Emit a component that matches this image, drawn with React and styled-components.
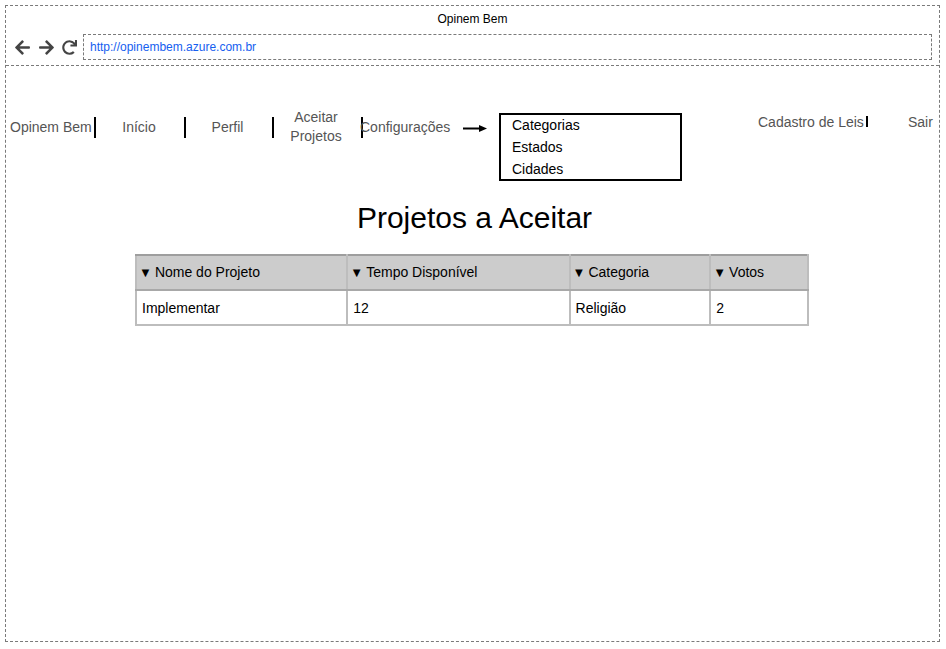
import React from "react";
import styled, { createGlobalStyle } from "styled-components";
import { FaArrowLeft, FaArrowRight, FaRedo } from "react-icons/fa";

const Global = createGlobalStyle`
  html, body { margin: 0; padding: 0; background: #fff; }
  body { font-family: "Liberation Sans", Arial, sans-serif; }
  * { box-sizing: border-box; }
`;

const Frame = styled.div`
  margin: 5px 0 0 5px;
  width: 935px;
  height: 637px;
  border: 1px dashed #7a7a7a;
  display: flex;
  flex-direction: column;
`;

const TitleBar = styled.div`
  height: 25px;
  display: flex;
  align-items: center;
  justify-content: center;
  font-size: 12px;
  color: #000;
  padding-top: 1px;
`;

const AddressRow = styled.div`
  height: 35px;
  display: flex;
  align-items: flex-start;
  padding: 3px 7px 0 8px;
  border-bottom: 1px dashed #7a7a7a;
`;

const NavIcons = styled.div`
  display: flex;
  align-items: center;
  height: 26px;
  gap: 7px;
  color: #444;
  margin-right: 6px;
`;

const AddressBox = styled.div`
  flex: 1;
  height: 26px;
  border: 1px dashed #7a7a7a;
  display: flex;
  align-items: center;
  padding-left: 6px;
  font-size: 12px;
  color: #1560f0;
`;

const Nav = styled.div`
  display: flex;
  align-items: flex-start;
  margin-top: 42px;
  padding-left: 4px;
  height: 73px;
`;

const NavLink = styled.div`
  width: ${(p) => p.$w}px;
  margin-top: ${(p) => (p.$top ?? 10)}px;
  margin-left: ${(p) => p.$ml || 0}px;
  padding-right: ${(p) => p.$pr || 0}px;
  font-size: 14px;
  line-height: 19px;
  color: #555;
  text-align: ${(p) => p.$align || "center"};
  white-space: nowrap;
  flex: none;
`;

const Sep = styled.div`
  width: 2px;
  height: ${(p) => p.$h || 21}px;
  margin-top: ${(p) => p.$top ?? 9}px;
  margin-left: ${(p) => p.$ml || 0}px;
  background: #000;
  flex: none;
`;

const LongArrow = styled.svg`
  margin: 16px 0 0 13px;
  flex: none;
`;

const Dropdown = styled.div`
  width: 183px;
  height: 68px;
  margin: 5px 0 0 12px;
  border: 2px solid #000;
  display: flex;
  flex-direction: column;
  padding: 0 0 0 11px;
  flex: none;
`;

const DropList = styled.div`
  margin-top: -1px;
`;

const DropItem = styled.div`
  font-size: 14px;
  line-height: 22px;
  color: #000;
`;

const Heading = styled.h1`
  margin: 19px 0 0 0;
  font-weight: normal;
  font-size: 30px;
  line-height: 36px;
  text-align: center;
  color: #000;
  padding-left: 4px;
`;

const Table = styled.table`
  margin: 18px 0 0 129px;
  border-collapse: collapse;
  width: 674px;
  font-size: 14px;
  color: #000;
`;

const Th = styled.th`
  width: ${(p) => p.$w}px;
  height: 35px;
  background: #cccccc;
  font-weight: normal;
  text-align: left;
  padding: 0 0 1px 2px;
  border: 2px solid #bdbdbd;
  border-top-color: #9e9e9e;
  border-bottom-color: #a8a8a8;
`;

const Td = styled.td`
  height: 35px;
  padding: 0 0 0 5px;
  border: 2px solid #bdbdbd;
`;

const Caret = styled.span`
  font-size: 13px;
  margin-right: 3px;
`;

const cols = [
  ["Nome do Projeto", 212],
  ["Tempo Disponível", 223],
  ["Categoria", 141],
  ["Votos", 98],
];
const row = ["Implementar", "12", "Religião", "2"];

export default function App() {
  return (
    <>
      <Global />
      <Frame>
        <TitleBar>Opinem Bem</TitleBar>
        <AddressRow>
          <NavIcons>
            <FaArrowLeft size={17} />
            <FaArrowRight size={17} />
            <FaRedo size={15} />
          </NavIcons>
          <AddressBox>http://opinembem.azure.com.br</AddressBox>
        </AddressRow>
        <Nav>
          <NavLink $w={84} $align="left">Opinem Bem</NavLink>
          <Sep />
          <NavLink $w={88} $pr={2}>Início</NavLink>
          <Sep />
          <NavLink $w={86} $pr={3}>Perfil</NavLink>
          <Sep />
          <NavLink $w={87} $pr={3} $top={0}>Aceitar<br />Projetos</NavLink>
          <Sep />
          <NavLink $w={90} $ml={-3} $align="left">Configurações</NavLink>
          <LongArrow width="24" height="9" viewBox="0 0 24 9">
            <line x1="0" y1="4.5" x2="20" y2="4.5" stroke="#000" strokeWidth="2" />
            <path d="M16 1 L24 4.5 L16 8 Z" fill="#000" />
          </LongArrow>
          <Dropdown>
            <DropList>
              <DropItem>Categorias</DropItem>
              <DropItem>Estados</DropItem>
              <DropItem>Cidades</DropItem>
            </DropList>
          </Dropdown>
          <NavLink $w={106} $ml={76} $top={5} $align="left">Cadastro de Leis</NavLink>
          <Sep $ml={2} $top={8} $h={11} />
          <NavLink $w={30} $ml={40} $top={5} $align="left">Sair</NavLink>
        </Nav>
        <Heading>Projetos a Aceitar</Heading>
        <Table>
          <thead>
            <tr>
              {cols.map(([c, w]) => (
                <Th key={c} $w={w}>
                  <Caret>▼</Caret>
                  {c}
                </Th>
              ))}
            </tr>
          </thead>
          <tbody>
            <tr>
              {row.map((v, i) => (
                <Td key={i}>{v}</Td>
              ))}
            </tr>
          </tbody>
        </Table>
      </Frame>
    </>
  );
}
